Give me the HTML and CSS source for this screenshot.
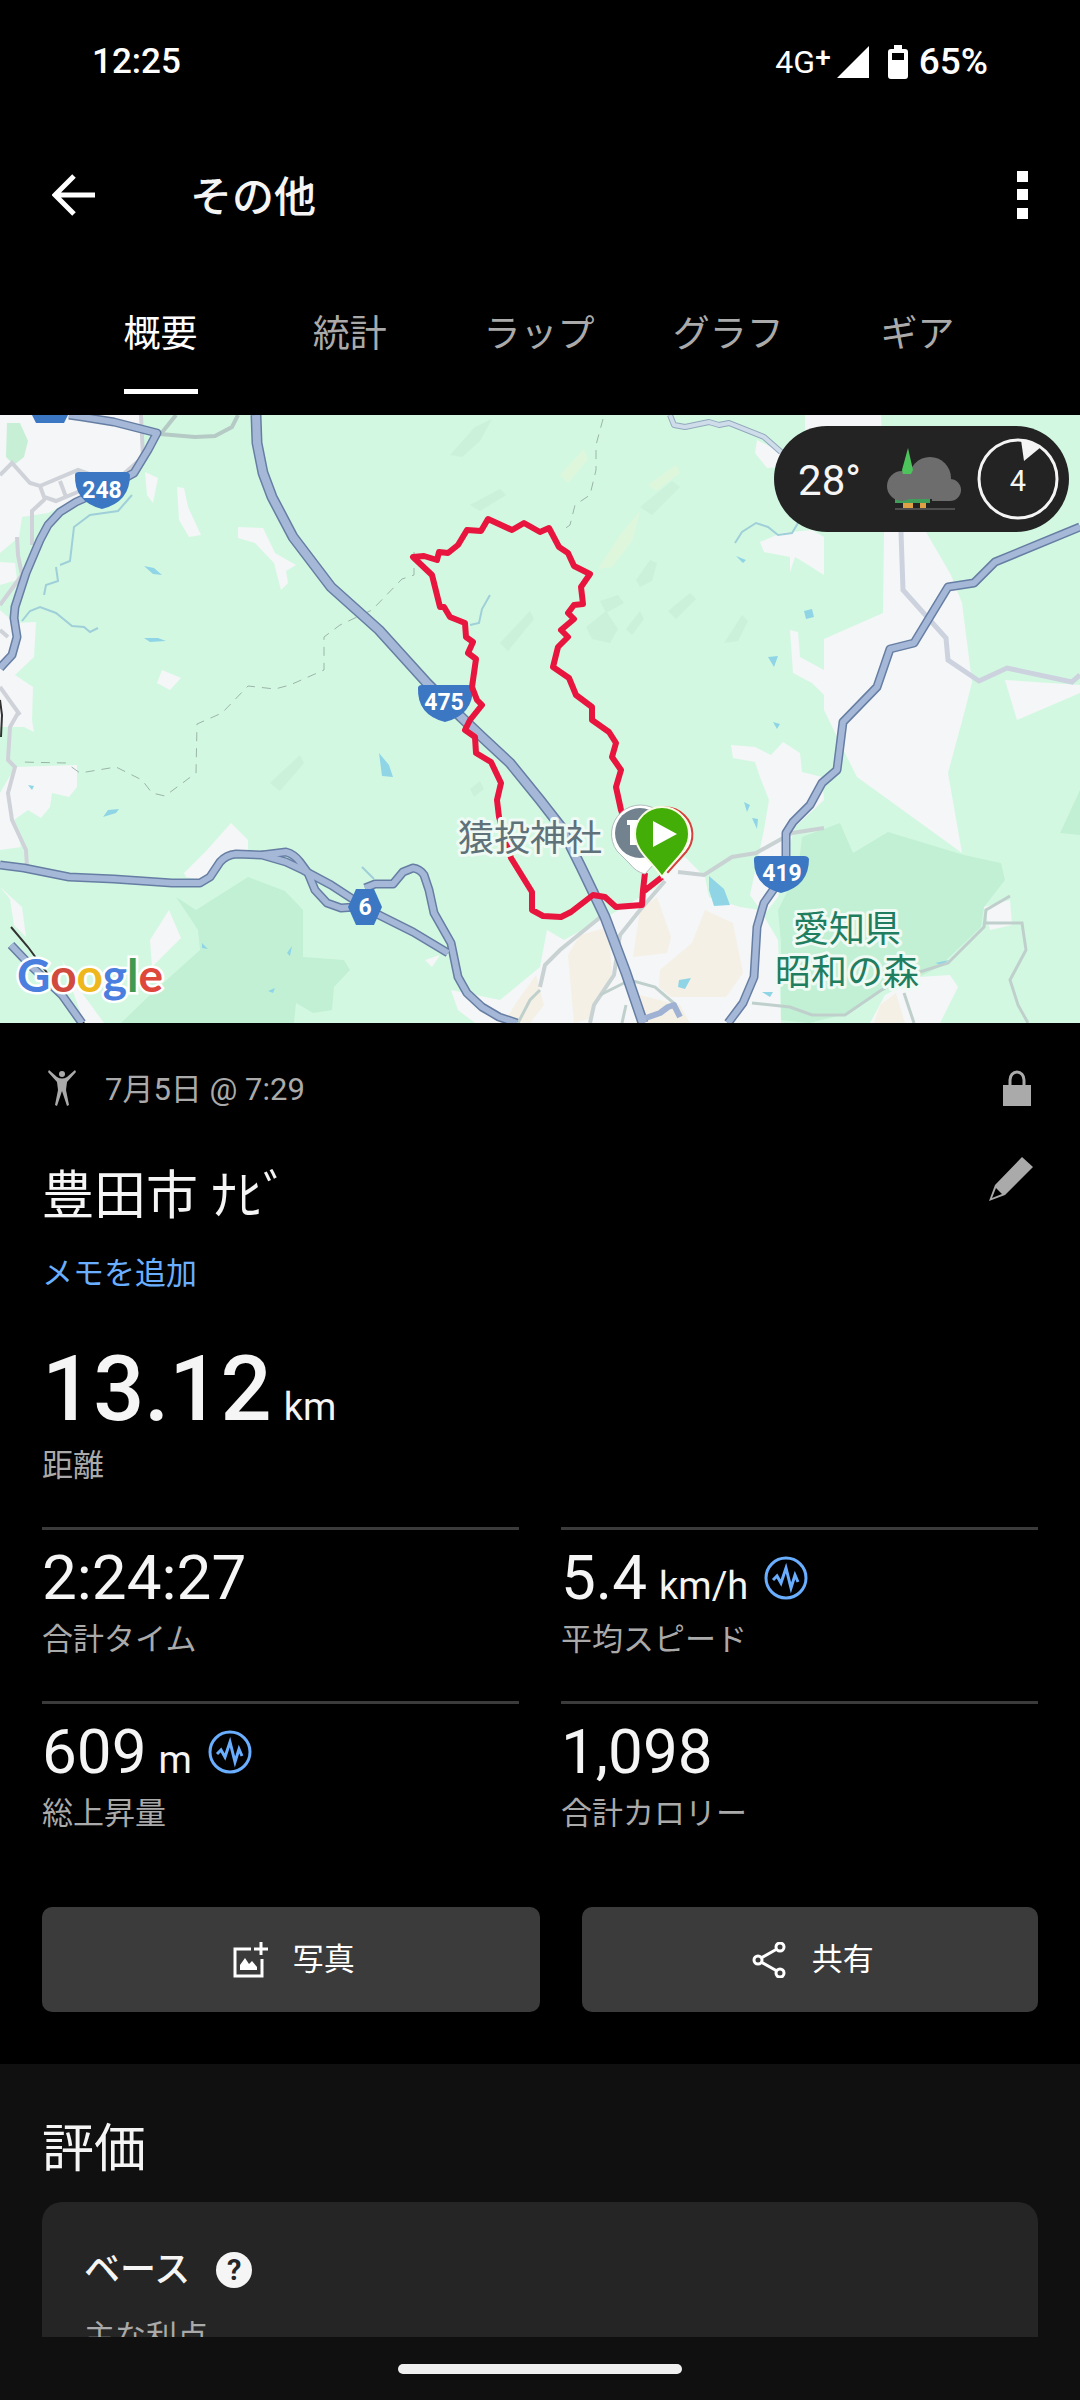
FILE: index.html
```html
<!DOCTYPE html>
<html lang="ja">
<head>
  <meta charset="UTF-8">
  <meta name="viewport" content="width=device-width, initial-scale=1.0">
  <title>その他</title>
  <link rel="stylesheet" href="styles.css">
</head>
<body>
  <div class="status-bar">
    <span class="clock">12:25</span>
    <div class="status-icons">
      <span class="network">4G</span>
      <span class="plus">+</span>
      <svg class="signal-icon" viewBox="0 0 32 32"><path d="M32 0V32H0Z" fill="#fff"/></svg>
      <svg class="battery-icon" viewBox="0 0 20 34">
        <path fill="#fff" fill-rule="evenodd" d="M6 0h8v4h3a3 3 0 0 1 3 3v24a3 3 0 0 1-3 3H3a3 3 0 0 1-3-3V7a3 3 0 0 1 3-3h3ZM4 8v7h12V8Z"/>
      </svg>
      <span class="battery-level">65%</span>
    </div>
  </div>

  <header class="app-bar">
    <button class="icon-button" aria-label="戻る">
      <svg class="back-icon" viewBox="0 0 44 44"><path d="M43 22H4M22 3 3 22l19 19" fill="none" stroke="#fff" stroke-width="5"/></svg>
    </button>
    <h1 class="app-title">その他</h1>
    <button class="icon-button" aria-label="メニュー">
      <svg class="menu-icon" viewBox="0 0 12 48"><path d="M1 0h11v11H1ZM1 18h11v11H1ZM1 37h11v11H1Z" fill="#fff"/></svg>
    </button>
  </header>

  <nav class="tabs">
    <button class="tab active">概要</button>
    <button class="tab">統計</button>
    <button class="tab">ラップ</button>
    <button class="tab">グラフ</button>
    <button class="tab">ギア</button>
  </nav>

  <main class="content">
    <div class="map">
      <svg class="map-canvas" viewBox="0 0 1080 608">
        <rect width="1080" height="608" fill="#d3f8e2"/>

        <!-- hills -->
        <g fill="#c6ecd6" opacity=".5">
          <path d="M450 40 475 12 492 4 480 26 462 42Z"/>
          <path d="M636 165 650 145 657 148 652 166 640 172Z"/>
          <path d="M600 186 618 180 624 188 606 198Z"/>
          <path d="M586 212 606 196 618 214 610 228 592 224Z"/>
          <path d="M724 228 742 200 748 206 738 226Z"/>
          <path d="M626 214 640 196 644 204 632 220Z"/>
          <path d="M668 196 690 178 696 184 676 204Z"/>
          <path d="M470 90 500 74 506 80 480 96Z"/>
          <path d="M640 92 672 66 680 72 652 100Z"/>
          <path d="M470 374 480 366 484 374 474 382Z"/>
          <path d="M500 228 530 196 534 204 508 236Z"/>
          <path d="M270 368 300 340 304 348 280 376Z"/>
        </g>
        <g fill="#def7dc">
          <path d="M598 154 620 120 640 96 632 126 612 152Z"/>
          <path d="M560 60 584 34 588 44 568 68Z"/>
          <path d="M648 70 676 50 680 58 656 76Z"/>
        </g>

        <!-- parks -->
        <g fill="#c2f0d4">
          <path d="M802 422 840 408 853 438 888 417 964 440 1001 448 1005 465 984 492 981 512 939 552 919 562 884 575 850 598 809 608 781 605V528L778 495 798 455Z"/>
          <path d="M1080 375 1060 418 1080 420Z"/>
          <path d="M176 482 196 495 248 462 285 476 303 495V542L344 545 350 555 334 572 332 595 313 598 296 588 294 608H121L152 578 200 535 198 515Z"/>
        </g>

        <!-- open ground -->
        <g fill="#f5f6f7">
          <path d="M0 0H141L143 42 134 60 79 82 48 98 22 102 19 122 0 138Z"/>
          <path d="M0 147 15 148 17 165 0 170ZM0 195 15 208 36 207 34 242 15 260 33 272 32 305 34 317 24 312 0 312Z"/>
          <path d="M15 352 77 350V372L69 382 52 378 50 392 41 403 28 395 14 405 21 432 0 435V378Z"/>
          <path d="M186 462 184 458 207 435 231 408 248 425V440L220 445 205 466Z"/>
          <path d="M169 495 181 523 152 552 150 525ZM0 472 22 492 26 522 14 510 10 484Z"/>
          <path d="M177 72 184 73 188 92 201 120 189 122 179 105Z"/>
          <path d="M238 112 263 113 275 138 296 150 286 156 288 168 281 175 274 148 255 128 238 123Z"/>
          <path d="M162 255 181 263 170 275 157 268ZM145 57 158 63 153 88 147 80ZM425 545 440 540 432 552Z"/>
          <path d="M62 545 80 575 104 608H84Z"/>
          <path d="M805 0H881L884 117 883 198 824 224V295L845 338 857 362 962 438 948 358 965 295 972 267 962 188 951 160 926 117 884 60H805Z"/>
          <path d="M1005 265 1080 270V278L1017 305Z"/>
          <path d="M757 25 781 37V52L767 53 755 38ZM760 127 781 118 812 115 824 122V160L805 148 795 142 790 157V142L764 137Z"/>
          <path d="M790 215 798 217 800 242 824 255V280L812 268 793 258Z"/>
          <path d="M731 330 755 332 771 340 783 327 800 338 802 357 822 362 824 385 795 412 786 442 778 482 764 500 750 480 764 415 769 385 760 362 755 347 733 343Z"/>
          <path d="M685 442 705 462 709 482 740 492 760 495 778 525 781 608H475L458 595 451 575 500 585 540 552 547 515 564 525 619 495 657 472 667 455Z"/>
          <path d="M919 562 950 560 958 572 940 608H870L885 580ZM984 492 1010 485 1012 510 990 515Z"/>
        </g>
        <g fill="#f5f0e6">
          <path d="M640 495 657 482 671 522 667 538 633 542ZM705 495 733 508 743 558 726 582H671L659 572 660 555 692 528ZM609 512 612 562 588 604 574 608 568 540 580 520Z"/>
          <path d="M505 606 516 588 536 560 544 590 530 608ZM640 580 680 590 690 608H636ZM880 590 896 578 905 608H874Z"/>
        </g>
        <path d="M7 8H20L28 26 24 42 14 50 6 42Z" fill="#c6efd6"/>

        <!-- water -->
        <g fill="#8fd5e6">
          <path d="M144 151 154 153 162 160 153 159ZM144 223 158 223 166 226 150 227ZM379 338 389 350 393 362 382 361ZM103 402 108 395 119 394 116 398ZM28 370 34 371 32 375Z"/>
          <path d="M709 461 724 474 730 490 714 491 709 475ZM679 565 691 563 685 574 678 572ZM736 141 746 145 743 148ZM804 196 812 194 814 202 806 204ZM768 242 778 241 774 252ZM744 387 750 390 747 397ZM752 403 758 404 757 414ZM773 307 780 309 777 314ZM935 548 949 545 942 550Z"/>
          <path d="M202 528 208 534 202 533ZM287 538 292 531 290 541ZM268 576 275 573 273 578ZM762 577 773 577 770 582Z"/>
        </g>
        <g fill="none" stroke="#9fcfd8" stroke-width="2">
          <path d="M22 206 30 196 40 192 56 198 72 211 84 212 90 217 98 213"/>
          <path d="M44 180 46 170 58 166 56 152M132 80 118 96 90 100 74 112 70 146 60 150"/>
          <path d="M735 128 742 117 756 108 768 112 778 120 792 118 798 108M470 210 479 208 482 194 490 180M362 452 374 464"/>
        </g>

        <!-- small roads -->
        <g fill="none" stroke="#cfd2d8" stroke-width="4">
          <path d="M0 60 12 48 30 68 40 71 78 55 92 60M40 71 44 82 56 86 80 76M60 66 66 82M45 84 32 96V130M141 0 143 42 120 62"/>
          <path d="M17 122 18 140 22 160 0 190M0 215 8 222M0 272 20 300"/>
          <path d="M18 298 10 312 8 345 15 352 8 378 12 405 26 435 27 452"/>
          <path d="M160 20 176 0M160 19 195 22 215 21 232 12 238 0" stroke="#b5cac5"/>
          <path d="M901 117 903 175 946 223 948 245 979 266 1007 253 1072 267 1080 260" stroke="#cdd2df" stroke-width="5"/>
          <path d="M678 457 704 460 732 442 756 438 792 418 824 413M665 466 640 495 620 520 614 560 594 590 590 608M603 500 560 535 545 550 540 572" stroke="#c9d2d3"/>
          <path d="M600 580 630 565 655 572 676 590M626 590 622 608M752 588 790 592 812 600 845 600 880 576 904 562 948 548 984 512 986 495 1010 481M984 508 1022 508 1026 535 1018 550 1010 565 1018 590 1028 608M904 578 914 608M518 608 530 585 540 575" stroke="#bfd0cc" stroke-width="3"/>
        </g>
        <path d="M0 285 2 300 1 322M11 512 28 532 84 608" fill="none" stroke="#333" stroke-width="2"/>

        <!-- trails -->
        <path d="M414 137V160L402 164 372 195 340 210 324 222V255L290 270 275 274 248 271 222 298 197 309 196 358 165 381 152 378 142 365 116 352 80 358 66 348 20 347M603 4 596 30V55L590 80 575 90 570 110 563 115" fill="none" stroke="#9ab5a8" stroke-width="1" stroke-dasharray="9 7"/>

        <!-- main roads: casing, then fill -->
        <defs>
          <g id="roads">
            <path d="M69 0 83 2 114 7 157 18 148 35 134 58 103 75 76 87 60 97 48 110 40 125 26 158 15 192 14 203 17 222 12 240 0 253"/>
            <path d="M0 450 24 453 69 462 114 464 172 468H200L210 462 220 447Q226 440 236 439L262 440 286 447 303 455 331 470 351 483 379 500 413 517 448 538"/>
            <path d="M262 440 286 437Q294 439 300 447L308 458 315 475 327 488 341 493 355 492"/>
            <path d="M365 473 375 469H393L403 457 413 453Q420 454 424 460L429 475 434 498 451 528 458 562 467 578 482 592 499 602 517 608"/>
            <path d="M1080 112 995 147 974 168 948 172 914 228 890 234 877 272 843 307 837 355 822 368 810 390 793 407 786 418V442L778 468 764 488 757 512 754 562 743 588 728 608"/>
            <path d="M11 530 30 550 62 580 82 608"/>
          </g>
          <path id="expressway" d="M256 0 257 28 263 58 272 82 293 122 331 172 379 215 427 268 461 302 482 322 510 348 540 385 561 412 581 452 605 502 626 558 643 608"/>
          <path id="shield" d="M-27-15Q-27-18-23-18H23Q27-18 28-15Q28 12 0 19Q-28 12-27-15Z"/>
        </defs>
        <g fill="none" stroke-linejoin="round">
          <path d="M670 0 674 10 685 12 709 7 719 10 729 8 764 22 781 37" stroke="#93a9bd" stroke-width="6"/>
          <path d="M670 0 674 10 685 12 709 7 719 10 729 8 764 22 781 37" stroke="#cfdcea" stroke-width="4"/>
          <use href="#roads" stroke="#667ea3" stroke-width="9"/>
          <use href="#expressway" stroke="#667ea3" stroke-width="11"/>
          <path d="M640 605 660 598 668 592 674 590 680 602" stroke="#9fb2d3" stroke-width="6"/>
          <use href="#roads" stroke="#a5b8d8" stroke-width="6"/>
          <use href="#expressway" stroke="#a5b8d8" stroke-width="8"/>
        </g>

        <!-- road numbers -->
        <path d="M32 0H68L64 8H36Z" fill="#3b77c2"/>
        <g fill="#3b77c2">
          <use href="#shield" x="102" y="75"/>
          <use href="#shield" x="445" y="288"/>
          <use href="#shield" x="781" y="459"/>
          <path d="M356 474H374L382 492 374 510H356L348 492Z"/>
        </g>
        <g class="road-number">
          <text x="102" y="83">248</text>
          <text x="444" y="295">475</text>
          <text x="782" y="466">419</text>
          <text x="365" y="500">6</text>
        </g>

        <!-- activity track -->
        <path class="track" d="M645 458 643 475 642 490 616 492 605 482 593 480 571 497 561 502 543 501 532 495V477L511 443 499 402 497 385 501 368 491 347 476 338 475 322 465 315 470 305 482 290 477 285 472 272 476 244 468 238 473 227 466 222 465 208 450 202 444 192H440L432 160 413 142 424 141 437 145 439 137 448 138 458 130 467 115 481 116 488 104 512 115 524 108 540 117 549 113 559 132 568 138 574 151 590 159 581 172 583 189 574 190 568 198 574 204 561 215 568 222 558 232 553 252 569 263 576 280 592 292V305L609 317 616 328 612 342 621 355 616 372 621 395 630 420M643 477 662 462"/>

        <text class="place shrine" x="458" y="436">猿投神社</text>
        <text class="place park" x="847" y="527">愛知県</text>
        <text class="place park" x="847" y="570">昭和の森</text>
        <text class="google" x="17" y="577"><tspan fill="#4a7fe0">G</tspan><tspan fill="#d04a3e">o</tspan><tspan fill="#eeb71b">o</tspan><tspan fill="#4a7fe0">g</tspan><tspan fill="#3e9a51">l</tspan><tspan fill="#de483c">e</tspan></text>

        <!-- pins -->
        <path d="M645 459Q636 457 630 449L617 436A29 29 0 1 1 664 436L654 449Z" fill="#fff" stroke="#b4bcc0"/>
        <circle cx="640" cy="418" r="25" fill="#72838f"/>
        <path d="M627 405H648V410H644V430H630V410H627Z" fill="#fff"/>
        <path d="M668 457 686 437A27 27 0 1 0 644 436Z" fill="#fff" stroke="#d6413c" stroke-width="2"/>
        <path d="M662 462C653 447 635 437 635 419A27 27 0 0 1 689 419C689 437 671 447 662 462Z" fill="#43ae08" stroke="#f8fbe4" stroke-width="2"/>
        <path d="M653 406 677 419 653 432Z" fill="#fff"/>
      </svg>

      <div class="weather">
        <span class="temperature">28°</span>
        <svg class="weather-icon" viewBox="0 0 76 62">
          <path d="M8 50H43V55H8Z" fill="#3f9e5a"/>
          <g fill="#6d6d6d">
            <circle cx="15" cy="38" r="15"/>
            <circle cx="43" cy="30" r="21"/>
            <circle cx="63" cy="42" r="11"/>
            <path d="M15 36H63V53H45V51H15Z"/>
          </g>
          <path d="M21 0 26 22 24 26H16L15 22Z" fill="#4dc35c"/>
          <path d="M16 55H26V60H16ZM33 55H39V60H33Z" fill="#e0a046"/>
          <path d="M8 61H68" stroke="#4d4d4d" stroke-width="2"/>
        </svg>
        <div class="wind">
          <svg class="wind-ring" viewBox="0 0 82 82">
            <circle cx="41" cy="41" r="39" fill="none" stroke="#f4f4f4" stroke-width="3"/>
            <path d="M44 2Q55 3 64 9L47 23Z" fill="#f4f4f4"/>
          </svg>
          <span class="wind-speed">4</span>
        </div>
      </div>
    </div>

    <section class="summary">
      <div class="meta">
        <svg class="person-icon" viewBox="0 0 28 36">
          <circle cx="14" cy="4" r="3" fill="#aaa"/>
          <path d="M1 0 9 7Q14 10 19 7L27 0 28 2 19 12 18 20 21 35 19 36 14 21 9 36 7 35 10 20 9 12 0 2Z" fill="#aaa"/>
        </svg>
        <span class="date">7月5日 @ 7:29</span>
        <svg class="lock-icon" viewBox="0 0 28 36">
          <path d="M7 17V10a7 8 0 0 1 14 0v7" fill="none" stroke="#aaa" stroke-width="3"/>
          <path d="M0 15h28v21H0Z" fill="#aaa"/>
        </svg>
      </div>
      <div class="name-row">
        <h2 class="name">豊田市 ﾅﾋﾞ</h2>
        <button class="edit-button" aria-label="編集">
          <svg class="edit-icon" viewBox="0 0 44 44">
            <path d="M33 0 44 10 16 38 0 44 6 28ZM7 31 3 41 13 37Z" fill="#aaa" fill-rule="evenodd"/>
          </svg>
        </button>
      </div>
      <a href="#" class="memo-link">メモを追加</a>

      <p class="distance">13.12 <span class="unit">km</span></p>
      <p class="label">距離</p>

      <div class="stats">
        <div class="stat">
          <p class="value">2:24:27</p>
          <p class="label">合計タイム</p>
        </div>
        <div class="stat">
          <p class="value">5.4 <span class="unit">km/h</span>
            <svg class="pulse-icon" viewBox="0 0 44 44"><circle cx="22" cy="22" r="20"/><path d="M9 24 13 20 17 27 22 12 27 32 31 19 34 26"/></svg>
          </p>
          <p class="label">平均スピード</p>
        </div>
        <div class="stat">
          <p class="value">609 <span class="unit">m</span>
            <svg class="pulse-icon" viewBox="0 0 44 44"><circle cx="22" cy="22" r="20"/><path d="M9 24 13 20 17 27 22 12 27 32 31 19 34 26"/></svg>
          </p>
          <p class="label">総上昇量</p>
        </div>
        <div class="stat">
          <p class="value">1,098</p>
          <p class="label">合計カロリー</p>
        </div>
      </div>

      <div class="actions">
        <button class="action-button">
          <svg class="action-icon" viewBox="0 0 36 36">
            <path d="M18 7H2V34H29V17" fill="none" stroke="#fff" stroke-width="3"/>
            <path d="M28 0V13M21 7H35" stroke="#fff" stroke-width="3"/>
            <path d="M7 28V23L12 16 16 22 19 19 24 25V28Z" fill="#fff"/>
          </svg>
          写真
        </button>
        <button class="action-button">
          <svg class="action-icon" viewBox="0 0 36 36" fill="none" stroke="#fff" stroke-width="3">
            <path d="M9 16 25 7M9 20 25 29"/>
            <circle cx="6" cy="18" r="4"/><circle cx="28" cy="5" r="4"/><circle cx="28" cy="31" r="4"/>
          </svg>
          共有
        </button>
      </div>
    </section>

    <section class="rating">
      <h2 class="rating-title">評価</h2>
      <div class="card">
        <div class="card-head">
          <h3 class="card-title">ベース</h3>
          <button class="help-button" aria-label="ヘルプ">?</button>
        </div>
        <p class="label">主な利点</p>
      </div>
    </section>
  </main>

  <footer class="nav-bar"><div class="nav-handle"></div></footer>
</body>
</html>
```
FILE: styles.css
```css
* {
  box-sizing: border-box;
}
body {
  display: flex;
  flex-direction: column;
  height: 100vh;
  margin: 0;
  background-color: #000;
  color: #f5f5f5;
  font-family: Roboto, "Noto Sans CJK JP", sans-serif;
  font-size: 31px;
  line-height: 40px;
}
h1, h2, h3, p {
  margin: 0;
  font-weight: 400;
}
button {
  padding: 0;
  border: none;
  background: none;
  color: inherit;
  font: inherit;
  cursor: pointer;
}
svg {
  display: block;
  flex-shrink: 0;
}
.status-bar {
  display: flex;
  flex-shrink: 0;
  align-items: center;
  justify-content: space-between;
  height: 122px;
  padding: 2px 92px 0;
  color: #fff;
  font-size: 35px;
  font-weight: 500;
}
.status-icons {
  display: flex;
  align-items: center;
}
.network {
  font-size: 32px;
  font-weight: 400;
}
.plus {
  padding-bottom: 8px;
  font-size: 28px;
}
.signal-icon {
  width: 32px;
  height: 32px;
  margin: 0 19px 0 6px;
}
.battery-icon {
  width: 20px;
  height: 34px;
  margin-right: 11px;
}
.battery-level {
  font-size: 37px;
}
.app-bar {
  display: flex;
  flex-shrink: 0;
  align-items: center;
  height: 146px;
  padding: 0 52px;
}
.back-icon {
  width: 44px;
  height: 44px;
}
.app-title {
  flex: 1;
  margin-left: 94px;
  padding-top: 6px;
  font-size: 42px;
  font-weight: 500;
}
.menu-icon {
  width: 12px;
  height: 48px;
}
.tabs {
  display: grid;
  grid-template-columns: repeat(5, 1fr);
  flex-shrink: 0;
  justify-items: center;
  height: 147px;
  padding: 0 68px 21px 66px;
}
.tab {
  padding-top: 12px;
  border-bottom: 5px solid transparent;
  color: #aaa;
  font-size: 37px;
}
.active {
  border-color: #fff;
  color: #fff;
}
.content {
  flex: 1;
  min-height: 0;
  overflow: hidden;
}
.map {
  position: relative;
}
.map-canvas {
  width: 100%;
  height: auto;
}
.track {
  fill: none;
  stroke: #e8153f;
  stroke-width: 6;
  stroke-linejoin: round;
}
.road-number {
  fill: #fff;
  font-size: 23px;
  font-weight: 700;
  text-anchor: middle;
}
.place {
  font-size: 36px;
  stroke: #eefaf3;
  stroke-width: 6px;
  stroke-linejoin: round;
  paint-order: stroke;
}
.shrine {
  fill: #5f7179;
}
.park {
  fill: #1f7d60;
  text-anchor: middle;
}
.google {
  font-family: Lato, sans-serif;
  font-size: 46px;
  font-weight: 700;
  stroke: #fff;
  stroke-width: 5px;
  paint-order: stroke;
}
.weather {
  position: absolute;
  top: 11px;
  right: 11px;
  display: flex;
  align-items: center;
  height: 106px;
  padding: 0 10px 0 24px;
  border-radius: 53px;
  background-color: #232323;
}
.temperature {
  padding-top: 4px;
  font-size: 42px;
}
.weather-icon {
  width: 76px;
  height: 62px;
  margin: 0 14px 0 26px;
}
.wind {
  display: grid;
  place-items: center;
}
.wind > * {
  grid-area: 1 / 1;
}
.wind-ring {
  width: 82px;
  height: 82px;
}
.wind-speed {
  padding-top: 4px;
  font-size: 29px;
}
.summary {
  padding: 43px 42px 52px;
}
.meta {
  display: flex;
  align-items: center;
  padding: 0 7px 0 6px;
  color: #aaa;
}
.person-icon {
  width: 28px;
  height: 36px;
  margin-right: 29px;
}
.date {
  padding-top: 4px;
}
.lock-icon {
  width: 28px;
  height: 36px;
  margin-left: auto;
}
.name-row {
  display: flex;
  justify-content: space-between;
  margin-top: 47px;
}
.name {
  padding-top: 6px;
  font-size: 52px;
  line-height: 68px;
}
.edit-button {
  align-self: flex-start;
  padding-right: 5px;
}
.edit-icon {
  width: 44px;
  height: 44px;
}
.memo-link {
  display: block;
  width: fit-content;
  margin-top: 23px;
  color: #6aaeff;
  text-decoration: none;
}
.distance {
  display: flex;
  align-items: baseline;
  gap: 12px;
  height: 100px;
  margin-top: 46px;
  font-size: 90px;
  font-weight: 500;
  line-height: 100px;
}
.unit {
  font-size: 38px;
  font-weight: 400;
  line-height: 40px;
}
.label {
  margin-top: 6px;
  color: #aaa;
}
.stats {
  display: grid;
  grid-template-columns: 1fr 1fr;
  column-gap: 42px;
  margin-top: 41px;
}
.stat {
  padding: 12px 0 41px;
  border-top: 3px solid #3b3b3b;
}
.value {
  display: flex;
  align-items: baseline;
  gap: 12px;
  font-size: 62px;
  line-height: 72px;
}
.pulse-icon {
  align-self: center;
  width: 44px;
  height: 44px;
  margin-left: 4px;
  fill: none;
  stroke: #6aaeff;
  stroke-width: 3;
}
.actions {
  display: grid;
  grid-template-columns: 12fr 11fr;
  gap: 42px;
  margin-top: 32px;
}
.action-button {
  display: flex;
  align-items: center;
  justify-content: center;
  gap: 24px;
  height: 105px;
  padding-left: 6px;
  border-radius: 10px;
  background-color: #3b3b3b;
  color: #fff;
}
.action-icon {
  width: 36px;
  height: 36px;
}
.rating {
  padding: 54px 42px;
  background-color: #101010;
}
.rating-title {
  font-size: 52px;
  line-height: 64px;
}
.card {
  margin-top: 20px;
  padding: 46px 42px;
  border-radius: 20px;
  background-color: #252525;
}
.card-head {
  display: flex;
  align-items: center;
  gap: 26px;
  margin-bottom: 25px;
}
.card-title {
  font-size: 36px;
  font-weight: 500;
  line-height: 44px;
}
.help-button {
  width: 36px;
  height: 36px;
  border-radius: 50%;
  background-color: #f5f5f5;
  color: #252525;
  font-size: 29px;
  font-weight: 700;
  line-height: 36px;
}
.nav-bar {
  display: flex;
  flex-shrink: 0;
  justify-content: center;
  height: 63px;
  padding-top: 27px;
  background-color: #101010;
}
.nav-handle {
  width: 284px;
  height: 10px;
  border-radius: 5px;
  background-color: #f0f0f0;
}
```
